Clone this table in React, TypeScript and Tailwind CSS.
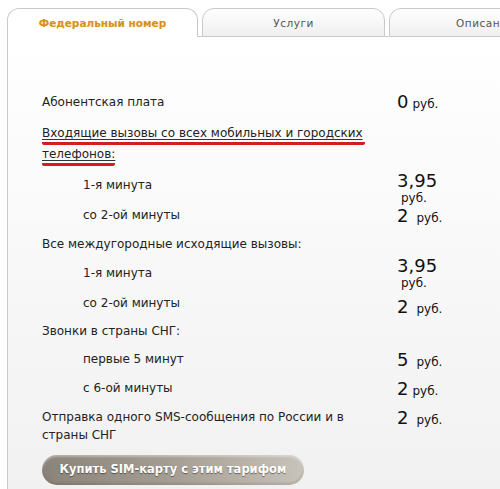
import React from "react";

type Row = {
  label: React.ReactNode;
  indent?: boolean;
  h: string;
  price?: { num: string; stacked?: boolean; off: string; gap?: string };
};

const rows: Row[] = [
  { label: "Абонентская плата", h: "h-[31px]", price: { num: "0", off: "-mt-[1px]", gap: "ml-[4px]" } },
  {
    label: (
      <>
        <span className="inline-block border-b-[3px] border-[#d11f1f] pb-[1px] pr-[2px] rounded-[2px] underline decoration-[#333] underline-offset-[2px] leading-[16px]">
          Входящие вызовы со всех мобильных и городских
        </span>
        <br />
        <span className="inline-block border-b-[3px] border-[#d11f1f] pb-[1px] rounded-[2px] underline decoration-[#333] underline-offset-[2px] leading-[16px]">
          телефонов:
        </span>
      </>
    ),
    h: "h-[52px]",
  },
  { label: "1-я минута", indent: true, h: "h-[30px]", price: { num: "3,95", stacked: true, off: "-mt-[5px]" } },
  { label: "со 2-ой минуты", indent: true, h: "h-[29px]", price: { num: "2", off: "mt-0", gap: "ml-[8px]" } },
  { label: "Все междугородные исходящие вызовы:", h: "h-[29px]" },
  { label: "1-я минута", indent: true, h: "h-[30px]", price: { num: "3,95", stacked: true, off: "-mt-[8px]" } },
  { label: "со 2-ой минуты", indent: true, h: "h-[28px]", price: { num: "2", off: "mt-[3px]", gap: "ml-[8px]" } },
  { label: "Звонки в страны СНГ:", h: "h-[28px]" },
  { label: "первые 5 минут", indent: true, h: "h-[29px]", price: { num: "5", off: "mt-0", gap: "ml-[8px]" } },
  { label: "с 6-ой минуты", indent: true, h: "h-[29px]", price: { num: "2", off: "mt-0", gap: "ml-[4px]" } },
  {
    label: (
      <>
        Отправка одного SMS-сообщения по России и в
        <br />
        страны СНГ
      </>
    ),
    h: "h-[47px]",
    price: { num: "2", off: "mt-0", gap: "ml-[8px]" },
  },
];

export default function App() {
  return (
    <div
      className="w-[500px] h-[489px] overflow-hidden bg-white text-[#222]"
      style={{ fontFamily: '"DejaVu Sans", Verdana, sans-serif' }}
    >
      {/* Tabs */}
      <div className="flex items-end pt-[8px] pl-[7px] h-[37px]">
        <div className="w-[191px] h-[29px] shrink-0 border border-b-0 border-[#c9c9c9] rounded-t-[12px] bg-white flex items-center justify-center">
          <span className="text-[10.5px] font-bold text-[#d4911f] mt-[2px] [text-shadow:0_0_3px_#fff2c8]">
            Федеральный номер
          </span>
        </div>
        <div className="w-[4px] h-[29px] shrink-0 border-b border-[#c9c9c9]" />
        <div className="w-[183px] h-[29px] shrink-0 border border-[#c9c9c9] rounded-t-[12px] bg-gradient-to-b from-[#ffffff] to-[#efefef] flex items-center justify-center">
          <span className="text-[10.5px] text-[#555] tracking-[0.5px] mt-[2px]">Услуги</span>
        </div>
        <div className="w-[4px] h-[29px] shrink-0 border-b border-[#c9c9c9]" />
        <div className="w-[200px] h-[29px] shrink-0 border border-[#c9c9c9] rounded-t-[12px] bg-gradient-to-b from-[#ffffff] to-[#efefef] flex items-center pl-[66px]">
          <span className="text-[10.5px] text-[#555] tracking-[0.5px] mt-[2px]">Описание</span>
        </div>
      </div>

      {/* Panel */}
      <div className="ml-[7px] h-[452px] border-l border-[#c9c9c9] bg-gradient-to-b from-[#ffffff] to-[#f1f1f1] pl-[34px] pt-[56px]">
        {rows.map((r, i) => (
          <div key={i} className={`flex ${r.h}`}>
            <div className={`w-[355px] shrink-0 text-[12px] leading-[18px] ${r.indent ? "pl-[41px]" : ""}`}>
              {r.label}
            </div>
            {r.price && (
              <div className={`${r.price.off} text-[#111]`}>
                {r.price.stacked ? (
                  <div className="flex flex-col">
                    <span className="text-[18px] leading-[20px]">{r.price.num}</span>
                    <span className="text-[12px] leading-[15px] ml-[4px]">руб.</span>
                  </div>
                ) : (
                  <div className="flex items-baseline">
                    <span className="text-[18px] leading-[20px]">{r.price.num}</span>
                    <span className={`text-[12px] leading-[15px] ${r.price.gap}`}>руб.</span>
                  </div>
                )}
              </div>
            )}
          </div>
        ))}

        <button
          className="w-[262px] h-[30px] rounded-full bg-gradient-to-r from-[#8a8379] via-[#a59e94] to-[#c8c3bb] shadow-[inset_0_2px_2px_rgba(255,255,255,0.35),inset_0_-2px_3px_rgba(0,0,0,0.12)] text-white text-[11.5px] font-bold flex items-center justify-center [text-shadow:0_1px_1px_rgba(0,0,0,0.45)]"
        >
          Купить SIM-карту с этим тарифом
        </button>
      </div>
    </div>
  );
}
